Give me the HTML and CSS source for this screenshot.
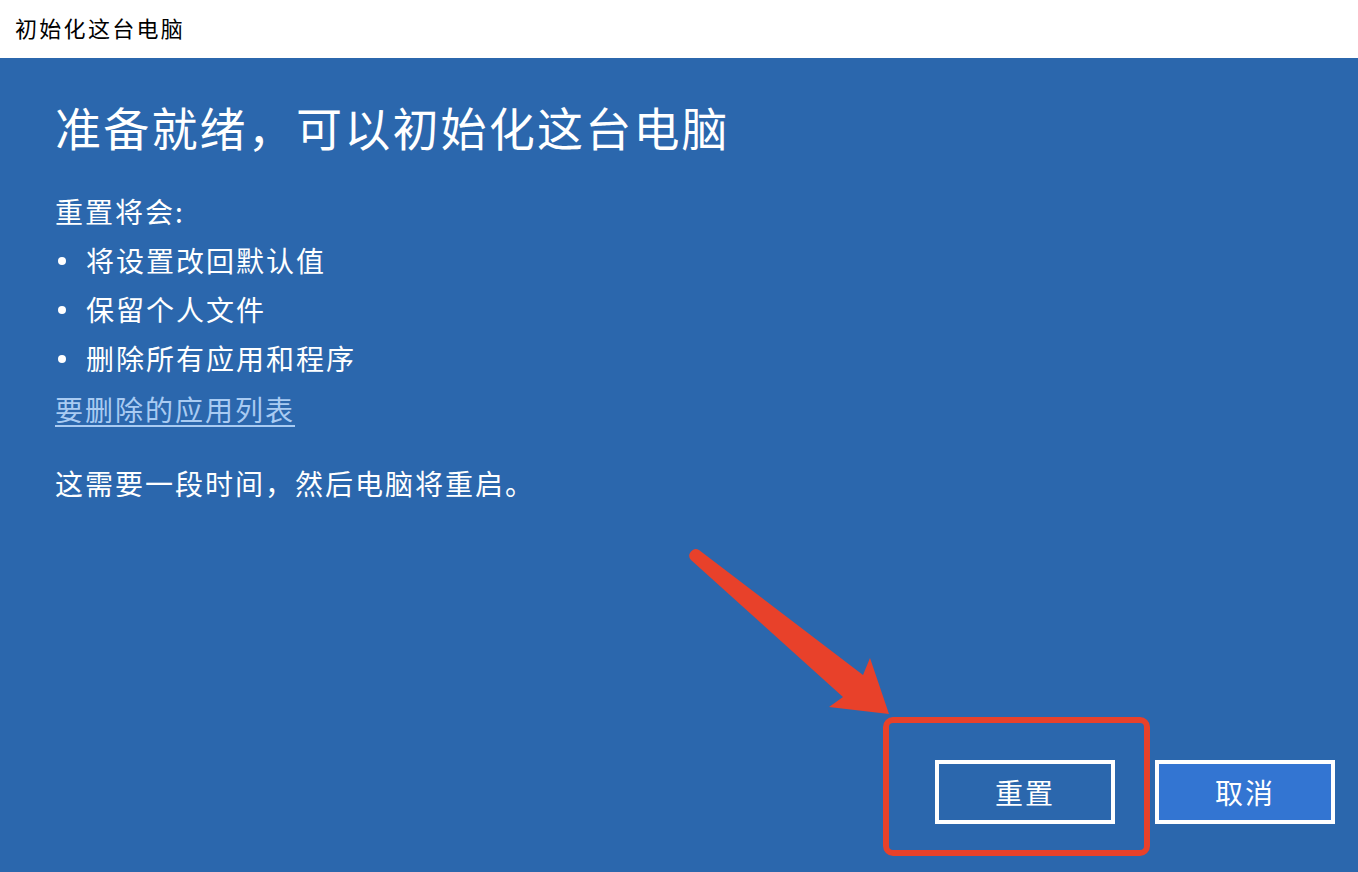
FILE: index.html
```html
<!DOCTYPE html>
<html lang="zh-CN">
<head>
<meta charset="utf-8">
<title>初始化这台电脑</title>
<link rel="stylesheet" href="styles.css">
</head>
<body>
<div class="window">
  <header class="titlebar">初始化这台电脑</header>
  <main class="content">
    <h1 class="heading">准备就绪，可以初始化这台电脑</h1>
    <p class="intro">重置将会:</p>
    <ul class="list">
      <li>将设置改回默认值</li>
      <li>保留个人文件</li>
      <li>删除所有应用和程序</li>
    </ul>
    <a class="link" href="#">要删除的应用列表</a>
    <p class="note">这需要一段时间，然后电脑将重启。</p>
    <div class="actions">
      <button class="btn btn-reset">重置</button>
      <button class="btn btn-cancel">取消</button>
    </div>
  </main>
  <div class="highlight"></div>
  <svg class="arrow" width="1358" height="872" viewBox="0 0 1358 872">
    <path d="M699 550 L863 675 L870 658 L889 714 L829 707 L843 697 L691 560 A6.5 6.5 0 0 1 699 550 Z" fill="#e8412a"/>
  </svg>
</div>
</body>
</html>
```

FILE: styles.css
```css
* { box-sizing: border-box; }
html, body { margin: 0; padding: 0; }
body {
  width: 1358px;
  height: 872px;
  overflow: hidden;
  font-family: "Noto Sans CJK SC", "Noto Sans", sans-serif;
}
.window {
  position: relative;
  width: 1358px;
  height: 872px;
  display: flex;
  flex-direction: column;
}
.titlebar {
  height: 58px;
  flex: none;
  background: #ffffff;
  color: #000000;
  font-size: 22px;
  letter-spacing: 2.3px;
  line-height: 54px;
  padding-left: 15px;
}
.content {
  flex: 1;
  background: #2b67ad;
  color: #ffffff;
  padding: 38px 23px 48px 55px;
  display: flex;
  flex-direction: column;
  align-items: flex-start;
}
.heading {
  margin: 0;
  font-size: 46px;
  letter-spacing: 2.2px;
  font-weight: 400;
  line-height: 60px;
}
.intro {
  margin: 30px 0 0;
  font-size: 28px;
  letter-spacing: 2px;
  line-height: 50px;
}
.list {
  list-style: none;
  margin: 0;
  padding: 0;
}
.list li {
  font-size: 28px;
  letter-spacing: 2px;
  line-height: 49px;
  display: flex;
  align-items: center;
}
.list li::before {
  content: "";
  width: 8px;
  height: 8px;
  border-radius: 50%;
  background: #ffffff;
  margin: 0 20px 0 3px;
  flex: none;
}
.link {
  font-size: 28px;
  letter-spacing: 2px;
  line-height: 52px;
  color: #a9cbf2;
  text-decoration: underline;
  text-underline-offset: 4px;
  text-decoration-thickness: 2px;
}
.note {
  margin: 23px 0 0;
  font-size: 28px;
  letter-spacing: 2px;
  line-height: 50px;
}
.actions {
  margin-top: auto;
  align-self: stretch;
  display: flex;
  justify-content: flex-end;
  gap: 40px;
}
.btn {
  width: 180px;
  height: 64px;
  border: 4px solid #ffffff;
  color: #ffffff;
  font-family: "Noto Sans CJK SC", "Noto Sans", sans-serif;
  font-size: 28px;
  letter-spacing: 2px;
  padding: 0;
}
.btn-reset { background: #2b67ad; }
.btn-cancel { background: #3375d2; }
.highlight {
  position: absolute;
  left: 883px;
  top: 717px;
  width: 267px;
  height: 139px;
  border: 6px solid #e8412a;
  border-radius: 10px;
}
.arrow {
  position: absolute;
  left: 0;
  top: 0;
  pointer-events: none;
}
```
